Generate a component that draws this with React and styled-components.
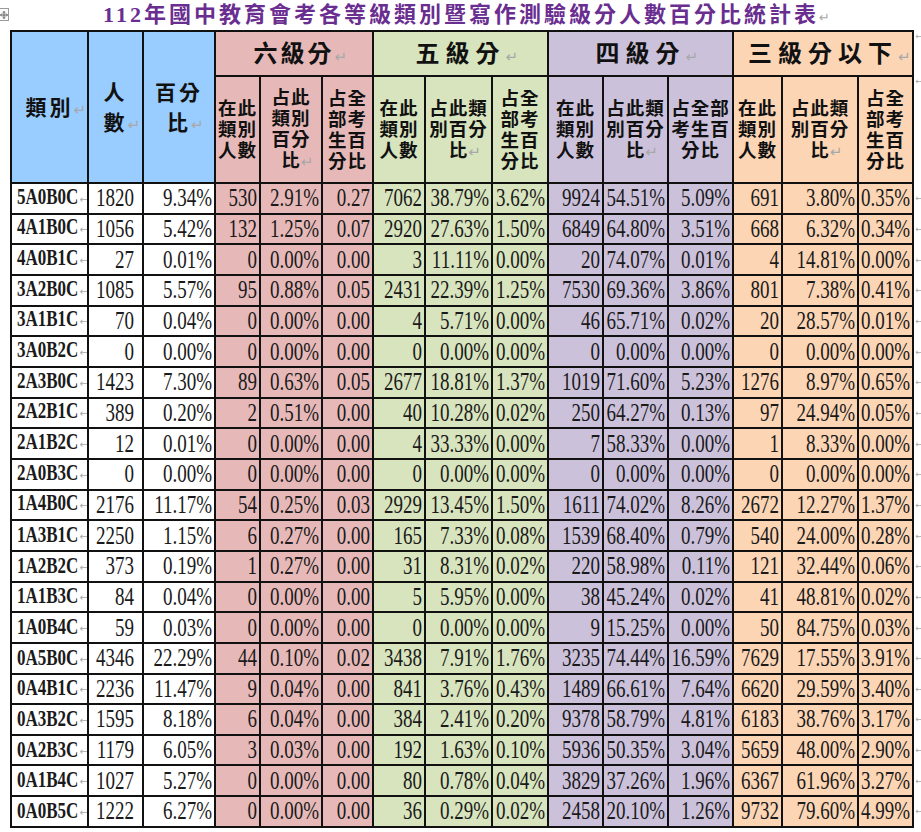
import React from "react";
import styled, { createGlobalStyle } from "styled-components";

const GlobalStyle = createGlobalStyle`
    body {
        margin: 0;
        background: #ffffff;
        font-family: "Liberation Serif", "Noto Sans CJK TC", serif;
        color: #1a1a1a;
    }
`;

const colors = {
    blue: "#99ccff",
    six: "#e6b9b8",
    five: "#d7e4bd",
    four: "#ccc1da",
    three: "#fcd5b5",
    white: "#ffffff",
};

const widths = [77, 55, 72, 45, 62, 51, 52, 67, 56, 55, 65, 65, 49, 76, 55, 9];

const groups = [
    {
        name: "六級分",
        bg: colors.six,
        spacing: 3,
        subs: [
            ["在此", "類別", "人數"],
            ["占此", "類別", "百分", "比"],
            ["占全", "部考", "生百", "分比"],
        ],
    },
    {
        name: "五級分",
        bg: colors.five,
        spacing: 6,
        subs: [
            ["在此", "類別", "人數"],
            ["占此類", "別百分", "比"],
            ["占全", "部考", "生百", "分比"],
        ],
    },
    {
        name: "四級分",
        bg: colors.four,
        spacing: 6,
        subs: [
            ["在此", "類別", "人數"],
            ["占此類", "別百分", "比"],
            ["占全部", "考生百", "分比"],
        ],
    },
    {
        name: "三級分以下",
        bg: colors.three,
        spacing: 6,
        subs: [
            ["在此", "類別", "人數"],
            ["占此類", "別百分", "比"],
            ["占全", "部考", "生百", "分比"],
        ],
    },
];

const rows = [
    ["5A0B0C", "1820", "9.34%", "530", "2.91%", "0.27", "7062", "38.79%", "3.62%", "9924", "54.51%", "5.09%", "691", "3.80%", "0.35%"],
    ["4A1B0C", "1056", "5.42%", "132", "1.25%", "0.07", "2920", "27.63%", "1.50%", "6849", "64.80%", "3.51%", "668", "6.32%", "0.34%"],
    ["4A0B1C", "27", "0.01%", "0", "0.00%", "0.00", "3", "11.11%", "0.00%", "20", "74.07%", "0.01%", "4", "14.81%", "0.00%"],
    ["3A2B0C", "1085", "5.57%", "95", "0.88%", "0.05", "2431", "22.39%", "1.25%", "7530", "69.36%", "3.86%", "801", "7.38%", "0.41%"],
    ["3A1B1C", "70", "0.04%", "0", "0.00%", "0.00", "4", "5.71%", "0.00%", "46", "65.71%", "0.02%", "20", "28.57%", "0.01%"],
    ["3A0B2C", "0", "0.00%", "0", "0.00%", "0.00", "0", "0.00%", "0.00%", "0", "0.00%", "0.00%", "0", "0.00%", "0.00%"],
    ["2A3B0C", "1423", "7.30%", "89", "0.63%", "0.05", "2677", "18.81%", "1.37%", "1019", "71.60%", "5.23%", "1276", "8.97%", "0.65%"],
    ["2A2B1C", "389", "0.20%", "2", "0.51%", "0.00", "40", "10.28%", "0.02%", "250", "64.27%", "0.13%", "97", "24.94%", "0.05%"],
    ["2A1B2C", "12", "0.01%", "0", "0.00%", "0.00", "4", "33.33%", "0.00%", "7", "58.33%", "0.00%", "1", "8.33%", "0.00%"],
    ["2A0B3C", "0", "0.00%", "0", "0.00%", "0.00", "0", "0.00%", "0.00%", "0", "0.00%", "0.00%", "0", "0.00%", "0.00%"],
    ["1A4B0C", "2176", "11.17%", "54", "0.25%", "0.03", "2929", "13.45%", "1.50%", "1611", "74.02%", "8.26%", "2672", "12.27%", "1.37%"],
    ["1A3B1C", "2250", "1.15%", "6", "0.27%", "0.00", "165", "7.33%", "0.08%", "1539", "68.40%", "0.79%", "540", "24.00%", "0.28%"],
    ["1A2B2C", "373", "0.19%", "1", "0.27%", "0.00", "31", "8.31%", "0.02%", "220", "58.98%", "0.11%", "121", "32.44%", "0.06%"],
    ["1A1B3C", "84", "0.04%", "0", "0.00%", "0.00", "5", "5.95%", "0.00%", "38", "45.24%", "0.02%", "41", "48.81%", "0.02%"],
    ["1A0B4C", "59", "0.03%", "0", "0.00%", "0.00", "0", "0.00%", "0.00%", "9", "15.25%", "0.00%", "50", "84.75%", "0.03%"],
    ["0A5B0C", "4346", "22.29%", "44", "0.10%", "0.02", "3438", "7.91%", "1.76%", "3235", "74.44%", "16.59%", "7629", "17.55%", "3.91%"],
    ["0A4B1C", "2236", "11.47%", "9", "0.04%", "0.00", "841", "3.76%", "0.43%", "1489", "66.61%", "7.64%", "6620", "29.59%", "3.40%"],
    ["0A3B2C", "1595", "8.18%", "6", "0.04%", "0.00", "384", "2.41%", "0.20%", "9378", "58.79%", "4.81%", "6183", "38.76%", "3.17%"],
    ["0A2B3C", "1179", "6.05%", "3", "0.03%", "0.00", "192", "1.63%", "0.10%", "5936", "50.35%", "3.04%", "5659", "48.00%", "2.90%"],
    ["0A1B4C", "1027", "5.27%", "0", "0.00%", "0.00", "80", "0.78%", "0.04%", "3829", "37.26%", "1.96%", "6367", "61.96%", "3.27%"],
    ["0A0B5C", "1222", "6.27%", "0", "0.00%", "0.00", "36", "0.29%", "0.02%", "2458", "20.10%", "1.26%", "9732", "79.60%", "4.99%"],
];

// background of each data column, left to right
const dataBg = [
    colors.white,
    colors.white,
    colors.white,
    colors.six,
    colors.six,
    colors.six,
    colors.five,
    colors.five,
    colors.five,
    colors.four,
    colors.four,
    colors.four,
    colors.three,
    colors.three,
    colors.three,
];

export default function App() {
    return (
        <>
            <GlobalStyle />
            <Page>
                <MoveHandle>
                    <svg width="8" height="8" viewBox="0 0 8 8">
                        <path
                            d="M0.5 4h7M4 0.5v7M1.8 2.6L0.5 4l1.3 1.4M6.2 2.6L7.5 4 6.2 5.4M2.6 1.8L4 0.5l1.4 1.3M2.6 6.2L4 7.5l1.4-1.3"
                            stroke="#555"
                            strokeWidth="0.9"
                            fill="none"
                        />
                    </svg>
                </MoveHandle>
                <Title>
                    112年國中教育會考各等級類別暨寫作測驗級分人數百分比統計表
                    <TitleMark>↵</TitleMark>
                </Title>
                <Table>
                    <colgroup>
                        {widths.map((w, i) => (
                            <Col key={i} $w={w} />
                        ))}
                    </colgroup>
                    <thead>
                        <HeadRow $h={45}>
                            <LeadCell rowSpan={2}>
                                類別
                                <Mark>↵</Mark>
                            </LeadCell>
                            <LeadCell rowSpan={2} $lines>
                                人<br />數<Mark>↵</Mark>
                            </LeadCell>
                            <LeadCell rowSpan={2} $lines>
                                百分<br />比<Mark>↵</Mark>
                            </LeadCell>
                            {groups.map((g) => (
                                <GroupCell
                                    key={g.name}
                                    colSpan={3}
                                    $bg={g.bg}
                                    $spacing={g.spacing}
                                >
                                    {g.name}
                                    <Mark>↵</Mark>
                                </GroupCell>
                            ))}
                            <EndCell $top>←</EndCell>
                        </HeadRow>
                        <HeadRow $h={107}>
                            {groups.map((g) =>
                                g.subs.map((lines, k) => (
                                    <SubCell key={g.name + k} $bg={g.bg}>
                                        {lines.map((l, j) => (
                                            <React.Fragment key={j}>
                                                {j > 0 && <br />}
                                                {l}
                                            </React.Fragment>
                                        ))}
                                        {lines[lines.length - 1].length < 2 && (
                                            <Mark>↵</Mark>
                                        )}
                                    </SubCell>
                                ))
                            )}
                            <EndCell $top>←</EndCell>
                        </HeadRow>
                    </thead>
                    <tbody>
                        {rows.map((r) => (
                            <DataRow key={r[0]}>
                                <LabelCell>
                                    <Label>{r[0]}</Label>
                                    <DataMark>←</DataMark>
                                </LabelCell>
                                {r.slice(1).map((v, i) => (
                                    <DataCell
                                        key={i}
                                        $bg={dataBg[i + 1]}
                                        $pad={i === 0 ? 8 : 2}
                                    >
                                        <Num>{v}</Num>
                                    </DataCell>
                                ))}
                                <EndCell>←</EndCell>
                            </DataRow>
                        ))}
                    </tbody>
                </Table>
            </Page>
        </>
    );
}

const Page = styled.div`
    position: relative;
    width: 921px;
    padding-left: 10px;
    box-sizing: border-box;
`;

const MoveHandle = styled.div`
    position: absolute;
    left: 0;
    top: 8px;
    width: 8px;
    height: 11px;
    border: 1px solid #9a9a9a;
    border-left: none;
    background: #fbfbfb;
    display: flex;
    align-items: center;
    justify-content: center;
`;

const Title = styled.h1`
    margin: 0;
    width: 902px;
    height: 30px;
    line-height: 29px;
    text-align: center;
    font-size: 22px;
    font-weight: 700;
    letter-spacing: 3px;
    color: #6a2d90;
    white-space: nowrap;
`;

const TitleMark = styled.span`
    display: inline-block;
    width: 0;
    font-family: "DejaVu Sans", sans-serif;
    font-weight: 400;
    font-size: 13px;
    letter-spacing: 0;
    color: #a8a8a8;
`;

const Table = styled.table`
    border-collapse: collapse;
    table-layout: fixed;
    width: 911px;
`;

const Col = styled.col`
    width: ${(p) => p.$w}px;
`;

const HeadRow = styled.tr`
    height: ${(p) => p.$h}px;
`;

const DataRow = styled.tr`
    height: 30.67px;
`;

const Mark = styled.span`
    display: inline-block;
    width: 0;
    white-space: nowrap;
    font-family: "DejaVu Sans", sans-serif;
    font-weight: 400;
    font-size: 15px;
    letter-spacing: 0;
    color: #a8a8a8;
`;

const BaseCell = styled.th`
    border: 2px solid #111;
    padding: 0;
    overflow: hidden;
    font-weight: 700;
    text-align: center;
    vertical-align: middle;
    color: #111;
`;

const LeadCell = styled(BaseCell)`
    background: ${colors.blue};
    font-size: 21px;
    line-height: ${(p) => (p.$lines ? "30px" : "24px")};
    letter-spacing: 3px;
    padding-top: 4px;
`;

const GroupCell = styled(BaseCell)`
    background: ${(p) => p.$bg};
    font-size: 24px;
    line-height: 30px;
    letter-spacing: ${(p) => p.$spacing}px;
    padding-top: 3px;
`;

const SubCell = styled(BaseCell)`
    background: ${(p) => p.$bg};
    font-size: 18.5px;
    line-height: 21px;
    letter-spacing: 1px;
    white-space: nowrap;
    padding-top: 2px;
`;

const EndCell = styled.td`
    border: none;
    padding: 0 0 0 1px;
    overflow: hidden;
    white-space: nowrap;
    vertical-align: ${(p) => (p.$top ? "top" : "middle")};
    font-family: "DejaVu Sans", sans-serif;
    font-size: 9px;
    color: #a8a8a8;
`;

const DataCell = styled.td`
    border: 2px solid #111;
    background: ${(p) => p.$bg};
    padding: 0 ${(p) => p.$pad}px 0 0;
    overflow: hidden;
    white-space: nowrap;
    text-align: right;
    vertical-align: middle;
    font-size: 19px;
    line-height: 24px;
`;

const LabelCell = styled(DataCell)`
    background: ${colors.white};
    text-align: left;
    padding: 0 0 0 5px;
`;

const Num = styled.span`
    display: inline-block;
    transform: scaleY(1.3);
`;

const Label = styled(Num)`
    font-size: 17px;
    font-weight: 700;
`;

const DataMark = styled.span`
    font-family: "DejaVu Sans", sans-serif;
    font-size: 10px;
    color: #a8a8a8;
    margin-left: 1px;
`;
